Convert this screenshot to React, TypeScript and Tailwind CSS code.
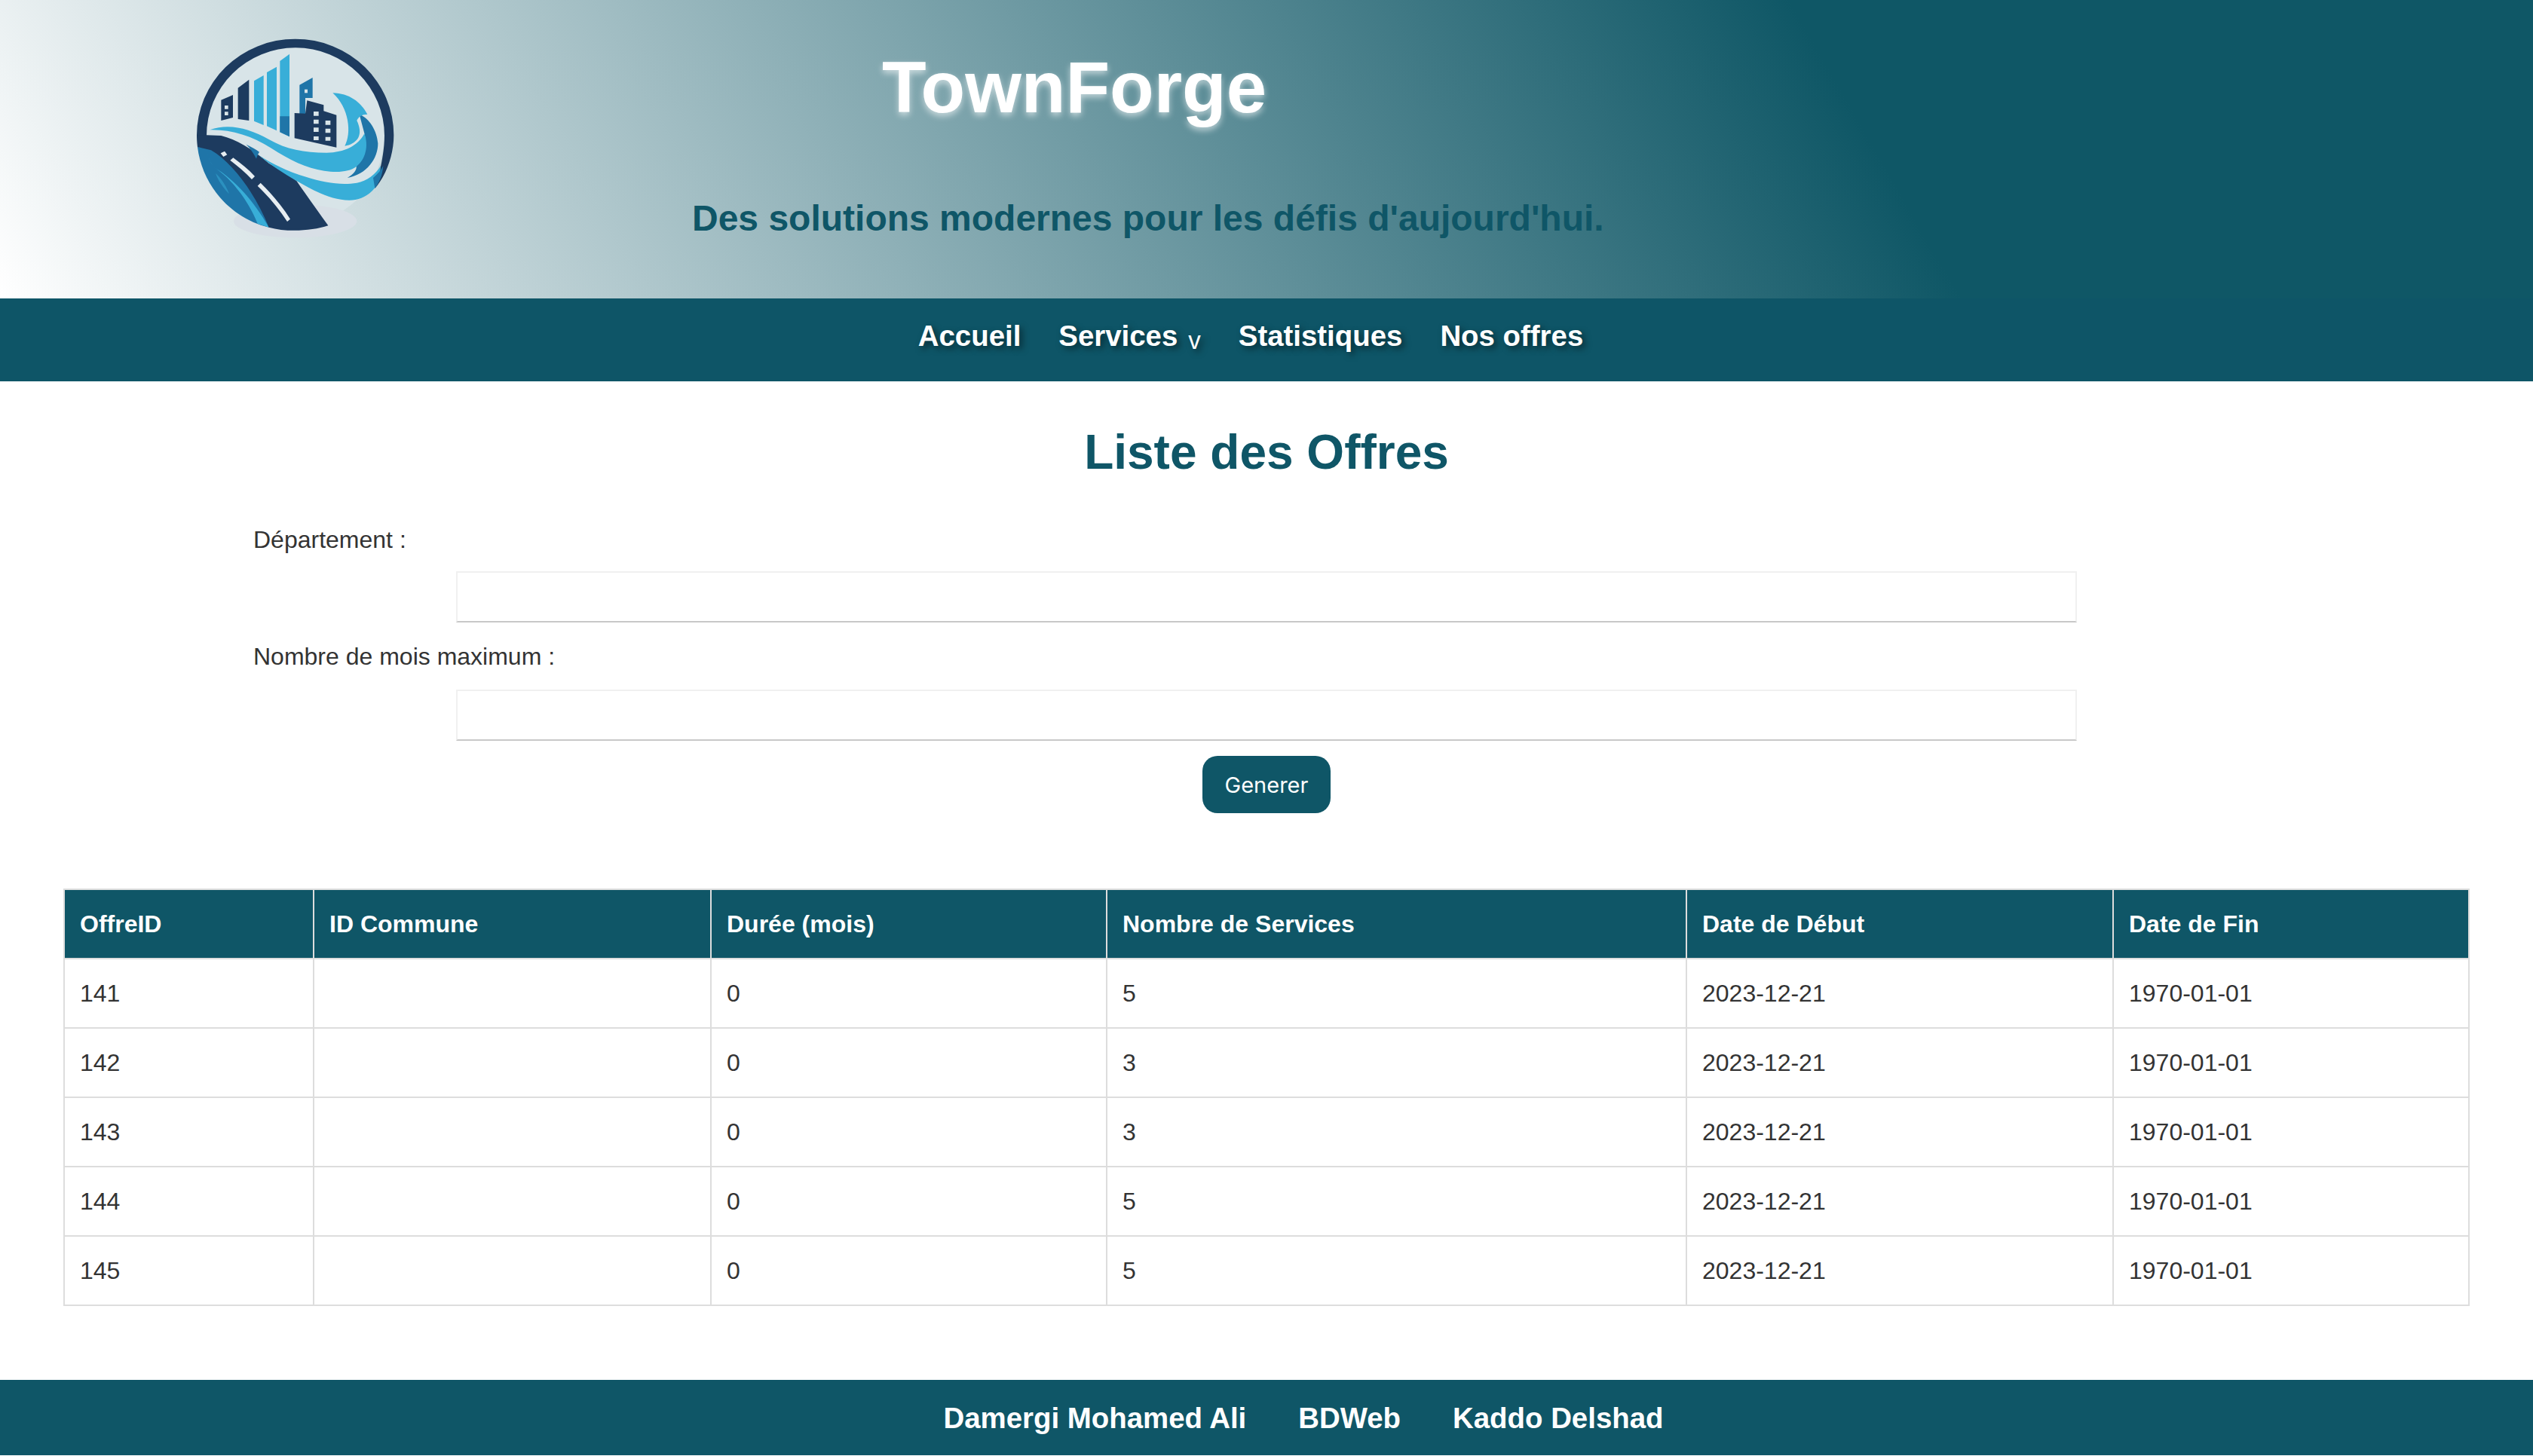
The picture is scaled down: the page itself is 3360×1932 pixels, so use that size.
const rows = [
  ["141", "", "0", "5", "2023-12-21", "1970-01-01"],
  ["142", "", "0", "3", "2023-12-21", "1970-01-01"],
  ["143", "", "0", "3", "2023-12-21", "1970-01-01"],
  ["144", "", "0", "5", "2023-12-21", "1970-01-01"],
  ["145", "", "0", "5", "2023-12-21", "1970-01-01"],
];

function Logo() {
  const dark = "#1d3b5f";
  const mid = "#1f75a8";
  const light = "#38aed8";
  const bg = "#d8e4e8";
  return (
    <svg viewBox="0 0 1200 960" className="block w-[400px] h-[320px]">
      <circle cx="575" cy="480" r="354" fill={bg} />
      <ellipse cx="575" cy="820" rx="245" ry="66" fill="#d8dfe6" />
      {/* ring */}
      <path d="M183 478 A392 383 0 0 1 967 478 C967 560 935 640 892 690 C905 650 930 560 930 480 A354 350 0 0 0 222 480 L222 500 L186 525 Z" fill={dark} />
      {/* lower-left blue */}
      <path d="M186 525 C205 680 320 810 470 845 L520 700 L300 530 Z" fill={mid} />
      <path d="M225 548 C232 575 240 590 250 605 C330 650 410 740 470 845 L425 830 C385 730 310 640 250 605 C240 590 230 570 225 548 Z" fill={light} />
      <path d="M258 630 C280 650 300 680 312 712 C290 690 268 660 258 630 Z" fill={light} fillOpacity="0.5" />
      {/* road */}
      <path d="M183 478 L222 478 L280 480 C340 495 400 530 470 590 C520 620 555 640 580 660 C625 725 665 780 706 838 C640 860 540 865 470 845 C420 720 330 590 240 538 L186 525 Z" fill={dark} />
      <path d="M380 515 C400 525 420 535 432 545 C425 555 422 565 420 572 C410 550 395 530 380 515 Z" fill={mid} />
      <path d="M278 550 L294 542 L304 556 L289 564 Z" fill="#e7eef2" />
      <path d="M316 578 L328 568 C358 590 390 615 414 642 L402 654 C375 625 345 600 316 578 Z" fill="#e7eef2" />
      <path d="M425 680 L437 668 C480 710 522 760 555 812 L543 822 C510 770 468 722 425 680 Z" fill="#e7eef2" />
      {/* lower swoosh */}
      <path d="M430 558 C480 590 540 622 620 645 C690 668 760 678 820 668 C860 660 895 635 915 600 C912 640 905 665 890 690 C865 720 830 737 790 737 C720 737 650 700 580 660 C530 630 480 600 430 558 Z" fill={light} />
      <path d="M885 648 C905 630 918 615 925 600 C922 640 908 668 892 690 Z" fill={mid} />
      {/* wave crest, dark part */}
      <path d="M830 395 C870 410 900 460 904 510 C905 570 860 635 782 648 C810 632 820 615 818 602 C850 570 862 520 850 470 Z" fill={mid} />
      {/* wave crest, light part */}
      <path d="M724 310 C790 312 835 345 862 395 C840 395 826 405 820 420 C832 445 836 470 825 490 C812 508 795 518 772 521 C800 470 790 370 724 310 Z" fill={light} />
      {/* upper swoosh */}
      <path d="M235 457 C310 430 390 450 470 495 C540 535 610 548 700 548 C770 548 825 520 850 472 C868 520 855 575 818 603 C790 625 740 628 690 620 C620 610 550 575 480 530 C400 480 320 455 235 457 Z" fill={light} />
      {/* bars */}
      <path d="M280 338 L327 318 L327 408 L280 420 Z" fill={dark} />
      <path d="M294 360 h14 v14 h-14 Z M294 385 h14 v14 h-14 Z" fill={bg} />
      <path d="M347 290 L391 257 L391 420 L347 414 Z" fill={dark} />
      <path d="M411 262 L449 240 L449 438 L411 422 Z" fill={light} />
      <path d="M462 228 L501 206 L501 460 L462 442 Z" fill={light} />
      <path d="M514 183 L552 155 L552 484 L514 466 Z" fill={light} />
      <path d="M514 403 L552 403 L552 484 L514 466 Z" fill={mid} />
      {/* buildings */}
      <path d="M592 278 L644 249 L644 330 L615 330 L615 395 L592 395 Z" fill={mid} />
      <path d="M612 296 h12 v14 h-12 Z" fill={bg} />
      <path d="M572 390 L615 392 L622 340 L688 358 L688 382 L739 398 L739 527 L572 490 Z" fill={dark} />
      <path d="M648 384 h20 v17 h-20 Z M648 416 h20 v17 h-20 Z M695 420 h20 v17 h-20 Z M648 448 h20 v17 h-20 Z M695 452 h20 v17 h-20 Z M648 483 h20 v15 h-20 Z M695 485 h20 v15 h-20 Z" fill={bg} />
    </svg>
  );
}

export default function App() {
  return (
    <div className="min-h-[1932px] bg-white text-[32px] leading-[37px] text-[#333333] font-['Liberation_Sans',Arial,sans-serif]">
      <header className="h-[396px] flex bg-[linear-gradient(60deg,#ffffff_0%,#0f5766_72.5%)]">
        <div className="ml-[200px] mt-[20px]">
          <Logo />
        </div>
        <div className="flex flex-col items-start">
          <h1 className="ml-[570px] mt-[61px] text-[96px] leading-[110px] font-bold text-white [text-shadow:0_4px_8px_rgba(255,255,255,0.6)]">
            TownForge
          </h1>
          <p className="ml-[318px] mt-[91px] text-[48px] leading-[55px] font-bold text-[#0f5667]">
            Des solutions modernes pour les défis d'aujourd'hui.
          </p>
        </div>
      </header>

      <nav className="h-[110px] pb-[11px] pr-[42px] bg-[#0e5567] flex items-center justify-center gap-[50px] text-[38.4px] font-bold text-white [text-shadow:4px_4px_8px_rgba(0,0,0,0.5)]">
        <a>Accueil</a>
        <a className="flex items-baseline gap-[14px]">
          Services
          <span className="text-[33px] leading-none font-normal translate-y-[4px]">v</span>
        </a>
        <a>Statistiques</a>
        <a>Nos offres</a>
      </nav>

      <main className="pt-[56px]">
        <h2 className="text-center text-[64px] leading-[77px] font-bold text-[#0f5667]">Liste des Offres</h2>

        <form className="mt-[59px] px-[336px]">
          <label className="block leading-[37px] h-[37px]">Département :</label>
          <input className="block mt-[23px] mx-auto w-[2150px] h-[68px] bg-white border-2 border-[#f0f0f0] border-b-[#c8c8c8] outline-none" />
          <label className="block mt-[27px] leading-[37px] h-[37px]">Nombre de mois maximum :</label>
          <input className="block mt-[25px] mx-auto w-[2150px] h-[68px] bg-white border-2 border-[#f0f0f0] border-b-[#c8c8c8] outline-none" />
          <button
            type="button"
            className="block mx-auto mt-[20px] w-[170px] h-[76px] rounded-[20px] bg-[#0f5667] text-white text-[29px] font-['Inter',sans-serif]"
          >
            Generer
          </button>
        </form>

        <div className="mt-[100px] px-[84px]">
          <table className="w-[3190px] table-fixed border-collapse border-2 border-[#dddddd]">
            <thead>
              <tr className="h-[92px] bg-[#0f5667] text-white">
                <th className="w-[331px] border-2 border-[#dddddd] px-[20px] text-left font-bold">OffreID</th>
                <th className="w-[527px] border-2 border-[#dddddd] px-[20px] text-left font-bold">ID Commune</th>
                <th className="w-[525px] border-2 border-[#dddddd] px-[20px] text-left font-bold">Durée (mois)</th>
                <th className="w-[769px] border-2 border-[#dddddd] px-[20px] text-left font-bold">Nombre de Services</th>
                <th className="w-[566px] border-2 border-[#dddddd] px-[20px] text-left font-bold">Date de Début</th>
                <th className="w-[472px] border-2 border-[#dddddd] px-[20px] text-left font-bold">Date de Fin</th>
              </tr>
            </thead>
            <tbody>
              {rows.map((r) => (
                <tr key={r[0]} className="h-[92px]">
                  {r.map((c, i) => (
                    <td key={i} className="border-2 border-[#dddddd] px-[20px]">
                      {c}
                    </td>
                  ))}
                </tr>
              ))}
            </tbody>
          </table>
        </div>
      </main>

      <footer className="mt-[98px] h-[100px] pl-[98px] bg-[#0f5667] flex items-center justify-center gap-[69px] text-[38.4px] font-bold text-white">
        <span>Damergi Mohamed Ali</span>
        <span>BDWeb</span>
        <span>Kaddo Delshad</span>
      </footer>
    </div>
  );
}
